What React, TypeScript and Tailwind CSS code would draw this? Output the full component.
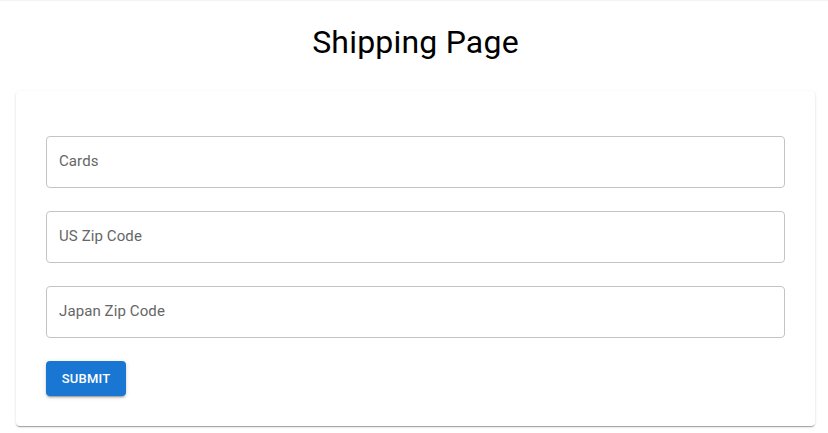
export default function App() {
  const fields = ["Cards", "US Zip Code", "Japan Zip Code"];

  return (
    <div className="min-h-[433px] bg-white font-['Roboto',sans-serif] border-t border-[#f3f3f3]">
      {/* Title */}
      <div className="w-[799px] ml-[16px] h-[90px] flex items-center justify-center pb-[8px]">
        <h1 className="text-[32px] leading-none font-normal text-black tracking-[0.2px]">
          Shipping Page
        </h1>
      </div>

      {/* Form card */}
      <div className="w-[799px] ml-[16px] rounded-[4px] bg-white shadow-[0_2px_1px_-1px_rgba(0,0,0,0.2),0_1px_1px_0_rgba(0,0,0,0.14),0_1px_3px_0_rgba(0,0,0,0.12)] px-[30px] pt-[45px] pb-[30px]">
        <form className="flex flex-col gap-[23px]">
          {fields.map((label) => (
            <div
              key={label}
              className="h-[52px] rounded-[4px] border border-[#c4c4c4] flex items-center px-[12px] pb-[1px]"
            >
              <span className="text-[15px] text-[#666666] tracking-[0.1px]">{label}</span>
            </div>
          ))}
          <div>
            <button
              type="button"
              className="h-[35px] w-[80px] rounded-[4px] bg-[#1976d2] text-white text-[13px] font-medium tracking-[0.2px] uppercase flex items-center justify-center shadow-[0_3px_1px_-2px_rgba(0,0,0,0.2),0_2px_2px_0_rgba(0,0,0,0.14),0_1px_5px_0_rgba(0,0,0,0.12)]"
            >
              Submit
            </button>
          </div>
        </form>
      </div>
    </div>
  );
}
